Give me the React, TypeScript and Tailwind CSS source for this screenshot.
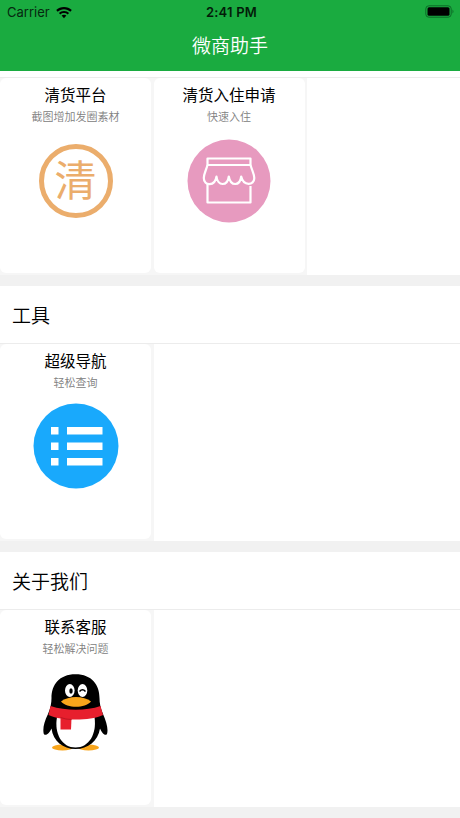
import type { ReactNode } from "react";

interface CardItem {
  title: string;
  sub: string;
  icon: ReactNode;
}

function ClearanceIcon() {
  return (
    <div className="mt-[19px] flex size-[74px] items-center justify-center rounded-full border-[5px] border-[#ebad6c]">
      <span className="-mt-1.5 text-[42px] leading-none font-normal text-[#ebad6c]">
        清
      </span>
    </div>
  );
}

function ShopIcon() {
  return (
    <svg className="mt-[14px]" width="84" height="84" viewBox="0 0 84 84">
      <circle cx="42" cy="42" r="41.5" fill="#e79abf" />
      <g fill="none" stroke="#fff" strokeWidth="2.2" strokeLinejoin="round">
        <path d="M20.5 19.500H63.5V26H20.5Z" />
        <path d="M20.500 26C19 31.500 16.800 35 16.800 39C16.800 47.500 28 47.500 29.500 37.500C30.500 47.500 40.500 47.500 41.800 37.500C43.500 47.500 53 47.500 54.200 37.500C56.500 47.500 67.300 46.500 67.300 39C67.300 35 65 31.500 63.500 26" />
        <path d="M20.5 45V63.500H63.5V47" />
      </g>
    </svg>
  );
}

function ListIcon() {
  return (
    <svg className="mt-[12px]" width="86" height="86" viewBox="0 0 86 86">
      <circle cx="43" cy="43" r="42.5" fill="#19a9fc" />
      <g fill="#fff">
        <path d="M18 24h7.5v7.5H18zM18 39.5h7.5V47H18zM18 55h7.5v7.5H18z" />
        <path d="M34 24h35.500v7.500H34zM34 39.500h35.500V47H34zM34 55h35.500v7.500H34z" />
      </g>
    </svg>
  );
}

function PenguinIcon() {
  return (
    <svg className="mt-[17px]" width="66" height="78" viewBox="0 0 66 78">
      <ellipse cx="19.500" cy="73.500" rx="10.500" ry="3" fill="#f8a51b" />
      <ellipse cx="45.500" cy="73.500" rx="10.500" ry="3" fill="#f8a51b" />
      <path
        d="M32.500 .2C16 .2 8.500 11 8.500 24C8.500 29 7.500 34 5 40C1 48-.5 55 .8 60C3 62.500 6.500 59 8.500 54.500C10 67 20 75 32.500 75S55 67 57 54.500C59 59 62 62.500 64 60C65.500 55 63.500 48 60 40C57.500 34 56.500 29 56.500 24C56.500 11 49 .2 32.500 .2Z"
        fill="#000"
      />
      <path
        d="M14 43C11 60 19 73.500 32.500 73.500S54 60 51.500 43Z"
        fill="#fff"
      />
      <ellipse cx="26.800" cy="16.500" rx="4.800" ry="6.500" fill="#fff" />
      <ellipse cx="39.500" cy="16.500" rx="4.800" ry="6.500" fill="#fff" />
      <ellipse cx="28" cy="17" rx="1.700" ry="2.700" fill="#000" />
      <path d="M36.500 17.500Q39.500 14 42.500 17.500" fill="none" stroke="#000" strokeWidth="1.500" />
      <path d="M18 27.500C25 21.500 41 21.500 48 27.500C42 34.500 24 34.500 18 27.500Z" fill="#f8a51b" />
      <path
        d="M7.500 32C23 37 43 37 57.500 32L60 41C52 44.500 44 45.500 32.500 45.500S14 44.500 5.500 41Z"
        fill="#e71f2d"
      />
      <path d="M17.500 43.500L28.500 44.500L28 55.500H17.500Z" fill="#e71f2d" />
      <path d="M17.500 43.500Q23 45.500 28.500 45.500" fill="none" stroke="#b3131f" strokeWidth=".8" />
    </svg>
  );
}

function StatusBar() {
  return (
    <div className="relative flex h-6 items-center justify-between pr-[5px] pl-[7px] font-[Inter,sans-serif] text-[13px] text-[#06280f]">
      <div className="flex items-center gap-[6px] pt-px">
        <span>Carrier</span>
        <svg width="16" height="12" viewBox="0 0 16 12" fill="#000">
          <path d="M8 0C5 0 2.200 1.200.2 3.100L1.700 4.700C3.400 3.100 5.600 2.200 8 2.200s4.600.9 6.300 2.500l1.500-1.600C13.800 1.200 11 0 8 0Z" />
          <path d="M8 3.900c-2 0-3.800.8-5.100 2l1.500 1.600C5.400 6.600 6.600 6.100 8 6.100s2.600.5 3.600 1.400l1.500-1.600C11.800 4.700 10 3.900 8 3.900Z" />
          <path d="M8 7.700c-.9 0-1.700.3-2.400.9L8 11.200l2.400-2.600C9.700 8 8.900 7.700 8 7.700Z" />
        </svg>
      </div>
      <span className="absolute inset-x-0 pt-[2px] pl-[3px] text-center font-semibold tracking-[0.2px] text-[#031c09]">
        2:41 PM
      </span>
      <svg className="-mt-px" width="30" height="13" viewBox="0 0 30 13">
        <rect x=".8" y=".8" width="25.400" height="11.400" rx="3" fill="none" stroke="#0c6b27" />
        <rect x="2.500" y="2.300" width="22" height="8.400" rx="1.500" fill="#000" />
        <path d="M27.500 4.500q2 2 0 4z" fill="#0c6b27" />
      </svg>
    </div>
  );
}

function Card({ title, sub, icon }: CardItem) {
  return (
    <div className="w-[153.5px] bg-[#f6f6f6]">
      <div className="flex h-[195px] w-[151px] flex-col items-center rounded-md bg-white pt-[5px]">
        <p className="text-[15.5px] leading-[22px] text-black">{title}</p>
        <p className="mt-[2px] text-[11px] leading-[18px] font-[350] text-[#808080]">
          {sub}
        </p>
        {icon}
      </div>
    </div>
  );
}

function CardRow({ items }: { items: CardItem[] }) {
  return (
    <div className="flex h-[198px] border-t border-[#ececec]">
      {items.map((item) => (
        <Card key={item.title} {...item} />
      ))}
      <div className="flex-1 bg-white" />
    </div>
  );
}

function Section({ title, items }: { title: string; items: CardItem[] }) {
  return (
    <section className="mt-[11px]">
      <h2 className="h-[57px] bg-white pl-3 text-[19px] leading-[57px] font-[350] text-black">
        {title}
      </h2>
      <CardRow items={items} />
    </section>
  );
}

const platform: CardItem[] = [
  { title: "清货平台", sub: "截图增加发圈素材", icon: <ClearanceIcon /> },
  { title: "清货入住申请", sub: "快速入住", icon: <ShopIcon /> },
];

const tools: CardItem[] = [
  { title: "超级导航", sub: "轻松查询", icon: <ListIcon /> },
];

const about: CardItem[] = [
  { title: "联系客服", sub: "轻松解决问题", icon: <PenguinIcon /> },
];

export default function App() {
  return (
    <div
      lang="zh-CN"
      className="h-[818px] w-[460px] overflow-hidden bg-[#f1f1f1] font-['Noto_Sans_CJK_SC',sans-serif]"
    >
      <header className="h-[71px] bg-[#1aab40]">
        <StatusBar />
        <h1 className="text-center text-[19px] leading-[42px] font-[350] text-white">
          微商助手
        </h1>
      </header>
      <div className="h-[6px] bg-white" />
      <CardRow items={platform} />
      <Section title="工具" items={tools} />
      <Section title="关于我们" items={about} />
    </div>
  );
}
